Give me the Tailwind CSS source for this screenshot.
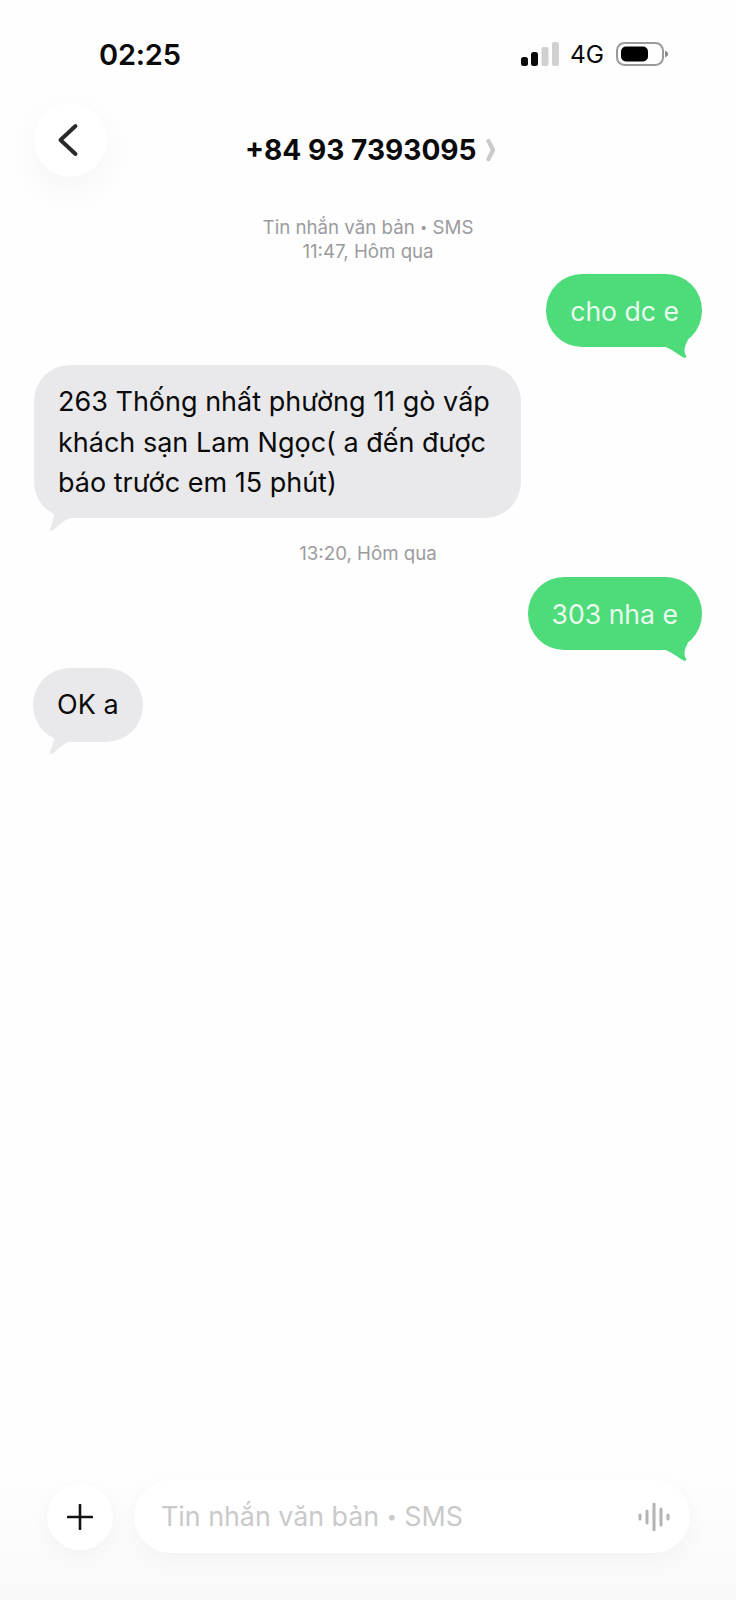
<!DOCTYPE html>
<html lang="vi">
<head>
  <meta charset="UTF-8" />
  <meta name="viewport" content="width=device-width, initial-scale=1.0" />
  <title>Tin nhắn</title>
  <script src="https://cdn.jsdelivr.net/npm/@tailwindcss/browser@4"></script>
</head>
<body class="bg-white">
  <div class="w-[736px] h-[1600px] flex flex-col bg-[#fefefe] font-['Inter','Noto_Sans',sans-serif] text-[#0a0a0a] overflow-hidden">

    <!-- status bar -->
    <div class="h-[44px] mt-[32px] pl-[99px] pr-[68px] flex items-center justify-between">
      <span class="text-[29px] font-semibold leading-none tracking-[-0.2px]">02:25</span>
      <div class="flex items-center">
        <svg width="38" height="24" viewBox="0 0 38 24" class="mr-[11px]">
          <rect x="0" y="15" width="7" height="9" rx="2.5" fill="#0a0a0a" />
          <rect x="10" y="10" width="7" height="14" rx="2.5" fill="#0a0a0a" />
          <rect x="20.5" y="5" width="7" height="19" rx="2" fill="#d0d0d0" />
          <rect x="31" y="0" width="7" height="24" rx="2" fill="#d0d0d0" />
        </svg>
        <span class="text-[24.500px] leading-none mr-[12px]">4G</span>
        <svg width="52" height="24" viewBox="0 0 52 24">
          <rect x="1" y="1" width="46" height="22" rx="7.5" fill="none" stroke="#9a9a9a" stroke-width="2" />
          <rect x="5" y="4.500" width="27" height="15" rx="5" fill="#000" />
          <path d="M49 8.500 l3 2 v3 l-3 2z" fill="#8f8f8f" />
        </svg>
      </div>
    </div>

    <!-- header -->
    <div class="h-[74px] mt-[27px] pl-[34px] flex items-center">
      <div class="w-[73px] h-[74px] rounded-full bg-white shadow-[0_12px_36px_rgba(0,0,0,0.045)] flex items-center justify-center shrink-0">
        <svg width="24" height="36" viewBox="0 0 24 36" class="mr-[5px]">
          <path d="M19.500 4 L4.500 18 L19.500 32" fill="none" stroke="#2a2a2a" stroke-width="4" stroke-linecap="round" stroke-linejoin="round" />
        </svg>
      </div>
      <div class="ml-[138px] mt-[20px] flex items-center">
        <span class="text-[28.100px] font-bold leading-none whitespace-nowrap">+84 93 7393095</span>
        <svg width="10" height="24" viewBox="0 0 10 24" class="ml-[9px]">
          <path d="M2.500 3 L7 12 L2.500 21" fill="none" stroke="#cacaca" stroke-width="4.200" stroke-linecap="round" stroke-linejoin="round" />
        </svg>
      </div>
    </div>

    <!-- messages -->
    <div class="flex flex-col mt-[39px] px-[34px]">
      <div class="text-center text-[18.700px] leading-[24px] text-[#9b9b9f]">
        <p>Tin nhắn văn bản <span class="text-[13px] leading-none align-[2px]">•</span> SMS</p>
        <p>11:47, Hôm qua</p>
      </div>

      <div class="self-end relative mt-[10px]">
        <div class="h-[73px] pt-[2px] pl-[24px] pr-[23px] rounded-[36px] bg-[#4edb7a] text-[#e9fbef] text-[26.600px] flex items-center whitespace-nowrap">cho dc e</div>
        <svg width="36" height="26" viewBox="0 0 36 26" class="absolute right-[10px] top-[60px]">
          <path d="M2 5 L8 12.500 C14 14 22 20.500 27.500 23.500 C30 24.500 31 23 30 21.500 C28 18 27.500 14 32 6 z" fill="#4edb7a" />
        </svg>
      </div>

      <div class="self-start relative mt-[18px]">
        <div class="w-[487px] h-[153px] pl-[24px] pr-[20px] pt-[3px] rounded-[36px] bg-[#e9e9eb] text-[27px] leading-[40.500px] flex flex-col justify-center">
          <p class="whitespace-nowrap">263 Thống nhất phường 11 gò vấp</p>
          <p class="whitespace-nowrap">khách sạn Lam Ngọc( a đến được</p>
          <p class="whitespace-nowrap">báo trước em 15 phút)</p>
        </div>
        <svg width="36" height="24" viewBox="0 0 36 24" class="absolute left-[13px] top-[144px]">
          <path d="M4 0 L7 7 C6.500 11 5 15 3 19.500 C2 21.500 3.500 22.500 5.500 21.500 C11 18 16 11 24 9 L24 0 z" fill="#e9e9eb" />
        </svg>
      </div>

      <p class="text-center text-[18.700px] leading-[24px] text-[#9b9b9f] mt-[24px]">13:20, Hôm qua</p>

      <div class="self-end relative mt-[11px]">
        <div class="h-[73px] pt-[3px] pl-[24px] pr-[24px] rounded-[36px] bg-[#4edb7a] text-[#e9fbef] text-[26.600px] flex items-center whitespace-nowrap">303 nha e</div>
        <svg width="36" height="26" viewBox="0 0 36 26" class="absolute right-[10px] top-[60px]">
          <path d="M2 5 L8 12.500 C14 14 22 20.500 27.500 23.500 C30 24.500 31 23 30 21.500 C28 18 27.500 14 32 6 z" fill="#4edb7a" />
        </svg>
      </div>

      <div class="self-start relative mt-[18px] -ml-px">
        <div class="h-[74px] pt-[1px] px-[24px] rounded-[37px] bg-[#e9e9eb] text-[27px] flex items-center whitespace-nowrap">OK a</div>
        <svg width="36" height="24" viewBox="0 0 36 24" class="absolute left-[14px] top-[64px]">
          <path d="M4 0 L7 7 C6.500 11 5 15 3 19.500 C2 21.500 3.500 22.500 5.500 21.500 C11 18 16 11 24 9 L24 0 z" fill="#e9e9eb" />
        </svg>
      </div>
    </div>

    <!-- composer -->
    <div class="mt-auto h-[120px] pl-[47px] pr-[46px] flex items-start gap-[21px] bg-gradient-to-b from-[#fefefe] to-[#f9f9f9]">
      <div class="w-[66px] h-[66px] mt-[4px] rounded-full bg-white shadow-[0_6px_24px_rgba(0,0,0,0.04)] flex items-center justify-center shrink-0">
        <svg width="26" height="26" viewBox="0 0 26 26">
          <path d="M13 1 V25 M1 13 H25" fill="none" stroke="#111" stroke-width="2.600" stroke-linecap="round" />
        </svg>
      </div>
      <div class="flex-1 h-[73px] rounded-[37px] bg-white shadow-[0_6px_24px_rgba(0,0,0,0.04)] pl-[27px] pr-[20px] flex items-center justify-between">
        <span class="text-[26.800px] text-[#c9c9cb] whitespace-nowrap">Tin nhắn văn bản <span class="text-[18px] leading-none align-[3px]">•</span> SMS</span>
        <svg width="32" height="28" viewBox="0 0 32 28">
          <path d="M2 12 V16 M9 8 V20 M16 1 V27 M23 6 V22 M30 12 V16" fill="none" stroke="#b4b4b4" stroke-width="3" stroke-linecap="round" />
        </svg>
      </div>
    </div>
  </div>
</body>
</html>
